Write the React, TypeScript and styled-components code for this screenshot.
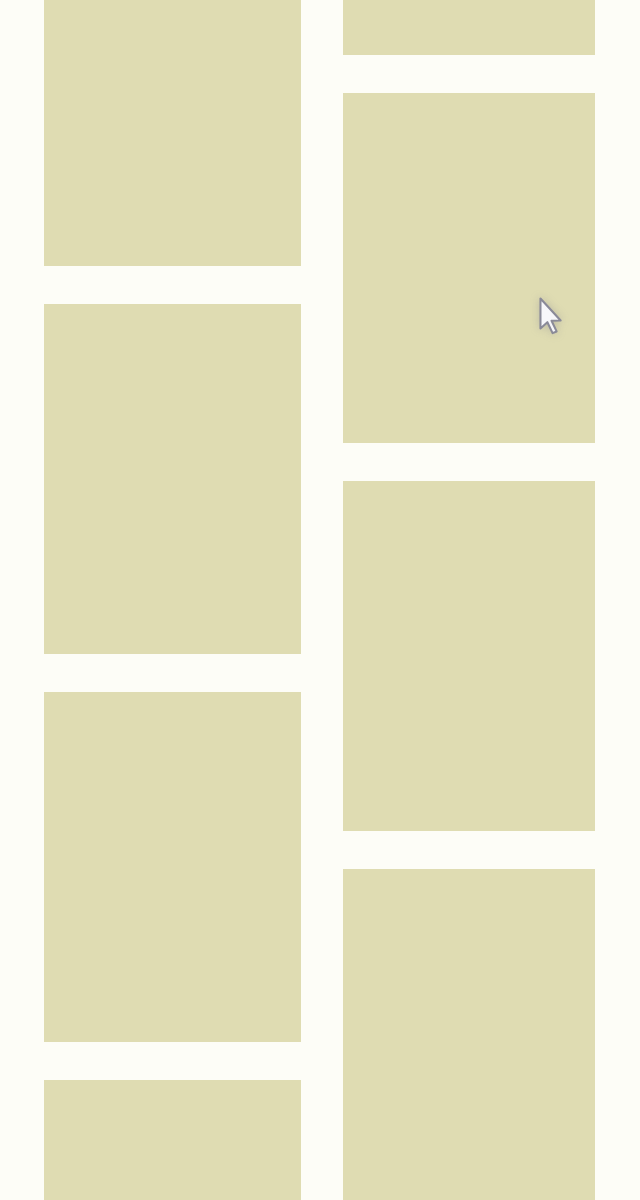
import styled, { createGlobalStyle } from 'styled-components';

const GlobalStyle = createGlobalStyle`
    html, body {
        margin: 0;
        padding: 0;
        background: #fdfdf7;
        overflow: hidden;
    }
`;

const Page = styled.div`
    position: relative;
    width: 640px;
    height: 1200px;
    overflow: hidden;
    background: #fdfdf7;
`;

const Grid = styled.div`
    display: flex;
    gap: 42px;
    padding: 0 45px 0 44px;
    align-items: flex-start;
`;

const Column = styled.div<{ $offset: number; $width: number }>`
    display: flex;
    flex-direction: column;
    gap: 38px;
    width: ${p => p.$width}px;
    margin-top: ${p => -p.$offset}px;
`;

const Tile = styled.div`
    height: 350px;
    background: #dfdcb2;
    flex-shrink: 0;
`;

const Pointer = styled.svg`
    position: absolute;
    left: 537px;
    top: 296px;
    filter: blur(0.7px) drop-shadow(0 0 4px rgba(120, 120, 140, 0.35));
`;

const leftTiles = [1, 2, 3, 4];
const rightTiles = [1, 2, 3, 4];

const App = () => {
    return (
        <Page>
            <GlobalStyle />
            <Grid>
                <Column $offset={84} $width={257}>
                    {leftTiles.map(n => <Tile key={n} />)}
                </Column>
                <Column $offset={295} $width={252}>
                    {rightTiles.map(n => <Tile key={n} />)}
                </Column>
            </Grid>
            <Pointer width="30" height="42" viewBox="0 0 26 36">
                <path
                    d="M3 2 L3 28 L9 22.5 L13.5 32 L17 30.5 L12.6 21.2 L20.5 21 Z"
                    fill="#f7f7fa"
                    stroke="#8a8a98"
                    strokeWidth="1.8"
                    strokeLinejoin="round"
                />
            </Pointer>
        </Page>
    );
};

export default App;
